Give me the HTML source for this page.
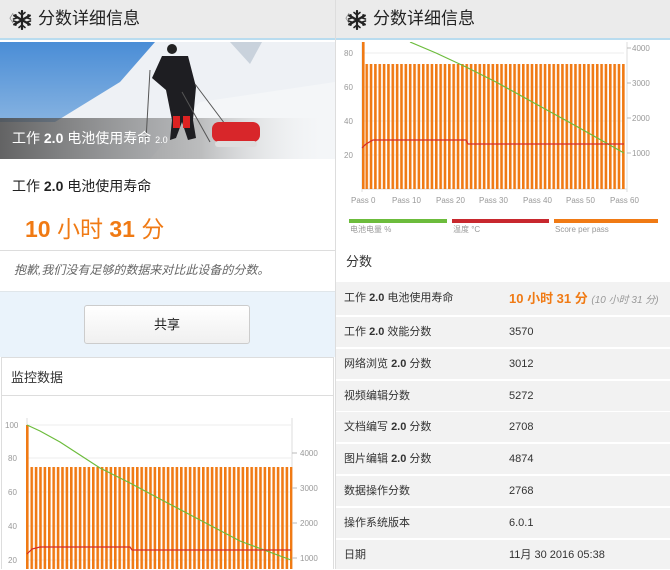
<!DOCTYPE html>
<html><head><meta charset="utf-8"><style>
*{margin:0;padding:0;box-sizing:border-box}
body{width:670px;height:569px;overflow:hidden;background:#fff;font-family:"Liberation Sans","Noto Sans CJK SC",sans-serif;position:relative;color:#333}
.abs{position:absolute}
.hdr{position:absolute;top:0;height:40px;background:#ebebeb;border-bottom:2px solid #b9dcef}
.hdr .t{position:absolute;top:8px;font-size:17px;line-height:22px;color:#222}
.hdr .b{position:absolute;left:3px;top:13px;font-size:11px;color:#888;line-height:12px}
.row{position:absolute;left:336px;width:334px;height:30px;line-height:30px;background:#f2f2f2;font-size:11px;color:#333}
.row .k{position:absolute;left:8px;top:0}
.row .v{position:absolute;left:173px;top:0}
</style></head><body>
<svg width="0" height="0" style="position:absolute"><defs><g id="sf" stroke="#222" stroke-width="2.2" stroke-linecap="round" fill="none"><path d="M10 1V19M2.2 5.5L17.8 14.5M2.2 14.5L17.8 5.5"/><path d="M7 2.5L10 5 13 2.5M7 17.5L10 15 13 17.5M1.5 9L4.6 8 3.8 4.8M18.5 9L15.4 8 16.2 4.8M1.5 11L4.6 12 3.8 15.2M18.5 11L15.4 12 16.2 15.2" stroke-width="1.6"/></g></defs></svg>
<!-- LEFT -->
<div class="hdr" style="left:0;width:335px"><span class="b">〈</span><svg class="abs" style="left:12px;top:10px" width="20" height="20"><use href="#sf"/></svg><span class="t" style="left:38px">分数详细信息</span></div>
<svg class="abs" style="left:0;top:42px" width="335" height="117">
<defs><linearGradient id="sky" x1="0" y1="0" x2="0" y2="1"><stop offset="0" stop-color="#4a8dd6"/><stop offset="1" stop-color="#a2c4e6"/></linearGradient>
<linearGradient id="band" x1="0" y1="0" x2="1" y2="0"><stop offset="0" stop-color="#4a4a4a" stop-opacity=".85"/><stop offset=".6" stop-color="#777" stop-opacity=".45"/><stop offset="1" stop-color="#fff" stop-opacity="0"/></linearGradient></defs>
<rect width="335" height="117" fill="url(#sky)"/>
<polygon points="55,80 120,40 155,0 335,0 335,117 0,117 0,80" fill="#eef1f5"/>
<polygon points="200,60 335,40 335,117 150,117" fill="#f4f6f8"/>
<polygon points="230,0 262,0 250,22" fill="#c9d2dc"/>
<rect x="0" y="76" width="335" height="41" fill="url(#band)"/>
<path d="M162 14 L188 14 L196 45 L193 78 L196 96 L188 98 L182 80 L176 96 L170 98 L172 78 L166 48 L152 36 Z" fill="#1e1e22"/>
<rect x="173" y="74" width="7" height="12" fill="#d22"/><rect x="183" y="74" width="7" height="12" fill="#d22"/>
<circle cx="172" cy="7" r="5" fill="#222"/>
<path d="M150 28 L146 98 M195 42 L225 82 M182 50 L210 100" stroke="#555" stroke-width="1"/>
<rect x="212" y="80" width="48" height="20" rx="7" fill="#d8262a"/>
<rect x="215" y="99" width="42" height="6" rx="3" fill="#ddd"/>
</svg>
<div class="abs" style="left:12px;top:128px;color:#fff;font-size:14px">工作 <b>2.0</b> 电池使用寿命 <span style="font-size:9px">2.0</span></div>
<div class="abs" style="left:12px;top:176px;font-size:14px;color:#222">工作 <b>2.0</b> 电池使用寿命</div>
<div class="abs" style="left:25px;top:210px;font-size:23px;color:#f07a14"><b>10</b> 小时 <b>31</b> 分</div>
<div class="abs" style="left:0;top:250px;width:335px;height:1px;background:#ddd"></div>
<div class="abs" style="left:14px;top:261px;font-size:12px;color:#666;font-style:italic">抱歉,我们没有足够的数据来对比此设备的分数。</div>
<div class="abs" style="left:0;top:291px;width:335px;height:66px;background:#eaf3fb;border-top:1px solid #e0e6ea"></div>
<div class="abs" style="left:84px;top:305px;width:166px;height:39px;border:1px solid #ccc;border-radius:3px;background:linear-gradient(#fff,#f0f0f0);text-align:center;line-height:37px;font-size:13px;color:#222">共享</div>
<div class="abs" style="left:1px;top:357px;width:333px;height:212px;border:1px solid #ddd;border-bottom:0"></div>
<div class="abs" style="left:11px;top:367px;font-size:13px;color:#333">监控数据</div>
<div class="abs" style="left:1px;top:395px;width:333px;height:1px;background:#ddd"></div>
<svg class="abs" style="left:0;top:396px" width="335" height="173" font-family="Liberation Sans" font-size="8" fill="#999">
<defs><pattern id="bl" x="26" y="0" width="4.4" height="200" patternUnits="userSpaceOnUse"><rect x="0" y="0" width="2.6" height="200" fill="#f07a14"/></pattern></defs>
<g stroke="#eee"><line x1="27" y1="29" x2="291" y2="29"/><line x1="27" y1="62" x2="291" y2="62"/><line x1="27" y1="96" x2="291" y2="96"/><line x1="27" y1="130" x2="291" y2="130"/><line x1="27" y1="164" x2="291" y2="164"/></g>
<line x1="27" y1="22" x2="27" y2="173" stroke="#ddd"/><line x1="292" y1="22" x2="292" y2="173" stroke="#ddd"/>
<rect x="30.4" y="71" width="262" height="110" fill="url(#bl)"/>
<rect x="26" y="29" width="2.6" height="150" fill="#f07a14"/>
<polyline points="27,29 40,35 60,46 80,59 100,72 130,87 160,103 200,124 240,145 291,164" fill="none" stroke="#6cbc3c" stroke-width="1.2"/>
<polyline points="27,158 32,153 40,151 130,151 132,154 291,154" fill="none" stroke="#d42a2a" stroke-width="1.2"/>
<text x="5" y="32">100</text><text x="8" y="65">80</text><text x="8" y="99">60</text><text x="8" y="133">40</text><text x="8" y="167">20</text>
<text x="300" y="60">4000</text><text x="300" y="95">3000</text><text x="300" y="130">2000</text><text x="300" y="165">1000</text>
<g stroke="#bbb"><line x1="292" y1="57" x2="297" y2="57"/><line x1="292" y1="92" x2="297" y2="92"/><line x1="292" y1="127" x2="297" y2="127"/><line x1="292" y1="162" x2="297" y2="162"/></g>
</svg>
<div class="abs" style="left:335px;top:0;width:1px;height:569px;background:#ddd"></div>
<!-- RIGHT -->
<div class="hdr" style="left:336px;width:334px"><span class="b">〈</span><svg class="abs" style="left:11px;top:10px" width="20" height="20"><use href="#sf"/></svg><span class="t" style="left:37px">分数详细信息</span></div>
<svg class="abs" style="left:336px;top:42px" width="334" height="240" font-family="Liberation Sans" font-size="8" fill="#999">
<defs><pattern id="br" x="29.4" y="0" width="4.35" height="200" patternUnits="userSpaceOnUse"><rect x="0" y="0" width="2.6" height="200" fill="#f07a14"/></pattern></defs>
<g stroke="#eee"><line x1="26" y1="11" x2="288" y2="11"/><line x1="26" y1="45" x2="288" y2="45"/><line x1="26" y1="79" x2="288" y2="79"/><line x1="26" y1="113" x2="288" y2="113"/><line x1="26" y1="147" x2="288" y2="147"/></g>
<line x1="26" y1="0" x2="26" y2="150" stroke="#ddd"/><line x1="291" y1="0" x2="291" y2="150" stroke="#ddd"/>
<line x1="26" y1="147" x2="291" y2="147" stroke="#ddd"/>
<rect x="29.4" y="22" width="260" height="125" fill="url(#br)"/>
<rect x="26" y="0" width="2.6" height="147" fill="#f07a14"/>
<polyline points="74,0 100,11 130,25 160,40 200,62 240,84 288,111" fill="none" stroke="#6cbc3c" stroke-width="1.2"/>
<polyline points="26,106 30,102 37,98 130,98 132,102 288,102" fill="none" stroke="#d42a2a" stroke-width="1.2"/>
<text x="8" y="14">80</text><text x="8" y="48">60</text><text x="8" y="82">40</text><text x="8" y="116">20</text>
<text x="296" y="9">4000</text><text x="296" y="44">3000</text><text x="296" y="79">2000</text><text x="296" y="114">1000</text>
<g stroke="#bbb"><line x1="291" y1="6" x2="295" y2="6"/><line x1="291" y1="41" x2="295" y2="41"/><line x1="291" y1="76" x2="295" y2="76"/><line x1="291" y1="111" x2="295" y2="111"/></g>
<text x="15" y="161">Pass 0</text><text x="56" y="161">Pass 10</text><text x="100" y="161">Pass 20</text><text x="143" y="161">Pass 30</text><text x="187" y="161">Pass 40</text><text x="230" y="161">Pass 50</text><text x="274" y="161">Pass 60</text>
<rect x="13" y="177" width="98" height="4" fill="#6cbc3c"/><rect x="116" y="177" width="97" height="4" fill="#c8282e"/><rect x="218" y="177" width="104" height="4" fill="#f07a14"/>
<text x="14" y="190">电池电量 %</text><text x="117" y="190">温度 °C</text><text x="219" y="190">Score per pass</text>
</svg>
<div class="abs" style="left:346px;top:251px;font-size:13px;color:#333">分数</div>
<div class="abs" style="left:336px;top:279px;width:334px;height:290px;background:#fff"></div>
<div class="row" style="top:282px;height:33px;line-height:33px"><span class="k">工作 <b>2.0</b> 电池使用寿命</span><span class="v" style="font-size:13px;color:#f07a14"><b>10 小时 31 分</b> <i style="font-size:10px;color:#999;font-weight:normal">(10 小时 31 分)</i></span></div>
<div class="row" style="top:317px"><span class="k">工作 <b>2.0</b> 效能分数</span><span class="v">3570</span></div>
<div class="row" style="top:349px"><span class="k">网络浏览 <b>2.0</b> 分数</span><span class="v">3012</span></div>
<div class="row" style="top:381px"><span class="k">视频编辑分数</span><span class="v">5272</span></div>
<div class="row" style="top:412px"><span class="k">文档编写 <b>2.0</b> 分数</span><span class="v">2708</span></div>
<div class="row" style="top:444px"><span class="k">图片编辑 <b>2.0</b> 分数</span><span class="v">4874</span></div>
<div class="row" style="top:476px"><span class="k">数据操作分数</span><span class="v">2768</span></div>
<div class="row" style="top:508px"><span class="k">操作系统版本</span><span class="v">6.0.1</span></div>
<div class="row" style="top:540px;height:29px"><span class="k">日期</span><span class="v">11月 30 2016 05:38</span></div>
</body></html>
